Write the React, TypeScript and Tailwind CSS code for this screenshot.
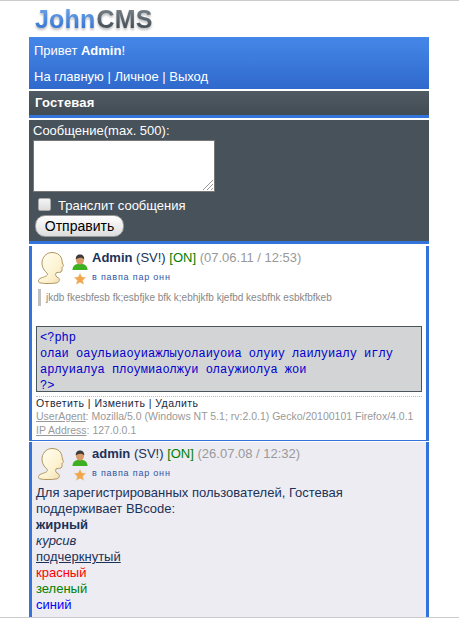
import type { ReactNode } from 'react';

function HeadAvatar() {
    return (
        <svg width="26" height="32" viewBox="0 0 26 32" className="shrink-0">
            <defs>
                <linearGradient id="headFill" x1="0" y1="0" x2="1" y2="1">
                    <stop offset="0" stopColor="#fffff4" />
                    <stop offset="0.6" stopColor="#fdf3d2" />
                    <stop offset="1" stopColor="#f3dcaa" />
                </linearGradient>
            </defs>
            <path
                d="M14 0.5C20 0.5 23.5 4 24 8.5C24.2 10.5 24.5 11.5 25.5 13.5C25.8 14.5 24.3 14.8 24 15.5C24 17 24.5 18.5 23 20C21.5 20.8 19 20 18 21C17 23 18 25 20.5 26C22 27 21.5 30 19 30.8C14 31.8 6 31.8 1.5 30.8C0 30 0.2 27.5 2 26.5C5 25 9 24.5 9.5 22.5C9.8 21 6 19 4.8 15.5C3.5 12 3.8 8 5.5 5.5C7.5 2 10.5 0.5 14 0.5Z"
                fill="url(#headFill)"
                stroke="#b09660"
                strokeWidth="1"
            />
        </svg>
    );
}

function UserIcon() {
    return (
        <svg width="16" height="16" viewBox="0 0 16 16" className="shrink-0">
            <path d="M0.5 16C0.5 12 3 10.5 5.5 10L10.5 10C13 10.5 15.5 12 15.5 16Z" fill="#3cb020" />
            <ellipse cx="8" cy="6" rx="4" ry="4.6" fill="#d89a68" />
            <path d="M3.8 5.5C3.5 2 5.5 0.5 8 0.5C10.5 0.5 12.5 2 12.2 5.5C11 4 9 3.6 7 4C5.8 4.2 4.6 4.6 3.8 5.5Z" fill="#3d3a3a" />
        </svg>
    );
}

function StarIcon() {
    return (
        <svg width="12" height="12" viewBox="0 0 12 12" className="shrink-0">
            <path d="M6 0.5L7.7 4L11.6 4.5L8.7 7.2L9.5 11.2L6 9.2L2.5 11.2L3.3 7.2L0.4 4.5L4.3 4Z" fill="#f2a54a" stroke="#e9c48f" strokeWidth="0.5" />
        </svg>
    );
}

function PostHead({ name, date }: { name: string; date: string }) {
    return (
        <div className="flex h-[43px] items-start">
            <div className="ml-[6px] mt-[6px]">
                <HeadAvatar />
            </div>
            <div className="ml-[8px] flex w-[16px] shrink-0 flex-col items-center">
                <div className="mt-[8px]">
                    <UserIcon />
                </div>
                <div className="mt-[3px]">
                    <StarIcon />
                </div>
            </div>
            <div className="ml-[4px] pt-[4px]">
                <div className="h-[20px] text-[13px] leading-[16px] text-[#1b3258]">
                    <b>{name}</b> (SV!) <span className="text-[#008000]">[ON]</span>{' '}
                    <span className="text-[#999]">({date})</span>
                </div>
                <div className="text-[9px] leading-[14px] tracking-[0.8px] text-[#2f55a8]">в павпа пар онн</div>
            </div>
        </div>
    );
}

function CodeLine({ children }: { children: ReactNode }) {
    return <div className="h-[16px] whitespace-pre">{children}</div>;
}

export default function App() {
    return (
        <div className="h-[618px] overflow-hidden border-y border-[#ccc] bg-white font-['Liberation_Sans',Arial,sans-serif] text-[13px] leading-[16px] text-white">
            <div className="h-[36px] pl-[35px] pt-[5px]">
                <div className="flex h-[26px] items-center text-[25px] font-bold leading-[26px] tracking-[0.2px] [filter:drop-shadow(0_2px_1px_#bbb)]">
                    <span className="bg-gradient-to-b from-[#6fa6ea] to-[#2f6fd0] bg-clip-text text-transparent">John</span>
                    <span className="ml-[1px] bg-gradient-to-b from-[#7d8890] to-[#3c464e] bg-clip-text text-transparent">CMS</span>
                </div>
            </div>

            <div className="ml-[29px] w-[400px]">
                <div className="h-[52px] bg-gradient-to-b from-[#4587e8] to-[#3069cc] px-[5px] pt-[6px]">
                    <div>
                        Привет <b>Admin</b>!
                    </div>
                    <div className="mt-[10px]">На главную | Личное | Выход</div>
                </div>

                <div className="mt-[2px] h-[27px] border-b-[3px] border-[#3274d9] bg-gradient-to-b from-[#4f5a62] to-[#414c54] pl-[6px] pt-[4px] font-bold tracking-[0.2px]">
                    Гостевая
                </div>

                <div className="mt-[2px] h-[124px] border-b-[3px] border-[#3274d9] bg-[#47525a] pl-[4px] pt-[3px]">
                    <div className="h-[17px]">Сообщение(max. 500):</div>
                    <div className="relative h-[52px] w-[182px] border border-[#777] bg-white">
                        <svg width="12" height="12" viewBox="0 0 12 12" className="absolute bottom-0 right-0">
                            <path d="M1 11L11 1M5 11L11 5M9 11L11 9" stroke="#999" strokeWidth="1" />
                        </svg>
                    </div>
                    <div className="mt-[6px] flex h-[16px] items-center pl-[5px]">
                        <span className="h-[13px] w-[13px] -translate-y-[2px] rounded-[2px] border border-[#aaa] bg-gradient-to-b from-[#f4f4f4] to-[#ddd]" />
                        <span className="ml-[7px]">Транслит сообщения</span>
                    </div>
                    <div className="ml-[2px] mt-[1px] flex h-[22px] w-[89px] items-center justify-center rounded-[10px] border border-[#999] bg-gradient-to-b from-white to-[#ddd] text-[14px] text-black">
                        Отправить
                    </div>
                </div>

                <div className="mt-[2px] h-[195px] border-x-[3px] border-b border-[#3274d9] bg-white">
                    <PostHead name="Admin" date="07.06.11 / 12:53" />
                    <div className="ml-[6px] h-[17px] border-l-[3px] border-[#c0c0c0] pl-[5px] text-[10px] leading-[17px] text-[#888]">
                        jkdb fkesbfesb fk;esbfjke bfk k;ebhjkfb kjefbd kesbfhk esbkfbfkeb
                    </div>
                    <div className="mx-[4px] mt-[20px] h-[66px] border border-[#4a555c] bg-[#d3d4d6] pl-[3px] pt-[3px] font-['Liberation_Mono','Courier_New',monospace] text-[12px] leading-[16px] text-[#0000cc]">
                        <CodeLine>{'<?php'}</CodeLine>
                        <CodeLine>олаи оаульиаоуиажлыуолаиуоиа олуиу лаилуиалу иглу</CodeLine>
                        <CodeLine>арлуиалуа плоумиаолжуи олаужиолуа жои</CodeLine>
                        <CodeLine>{'?>'}</CodeLine>
                    </div>
                    <div className="mx-[4px] mt-[4px] h-[13px] border-t border-dotted border-[#bbb] text-[10.5px] leading-[12px] tracking-[0.45px] text-[#1a2a40]">
                        Ответить | Изменить | Удалить
                    </div>
                    <div className="ml-[4px] h-[14px] text-[10.5px] leading-[14px] text-[#999]">
                        <u>UserAgent</u>: Mozilla/5.0 (Windows NT 5.1; rv:2.0.1) Gecko/20100101 Firefox/4.0.1
                    </div>
                    <div className="ml-[4px] h-[14px] text-[10.5px] leading-[14px] text-[#999]">
                        <u>IP Address</u>: 127.0.0.1
                    </div>
                </div>

                <div className="mt-[1px] h-[176px] border-x-[3px] border-[#3274d9] bg-[#edecf2] text-[#1b3258]">
                    <PostHead name="admin" date="26.07.08 / 12:32" />
                    <div className="ml-[4px]">
                        <div>Для зарегистрированных пользователей, Гостевая</div>
                        <div>поддерживает BBcode:</div>
                        <div className="font-bold">жирный</div>
                        <div className="italic">курсив</div>
                        <div className="underline">подчеркнутый</div>
                        <div className="text-[#f00]">красный</div>
                        <div className="text-[#008000]">зеленый</div>
                        <div className="text-[#00f]">синий</div>
                    </div>
                </div>
            </div>
        </div>
    );
}
